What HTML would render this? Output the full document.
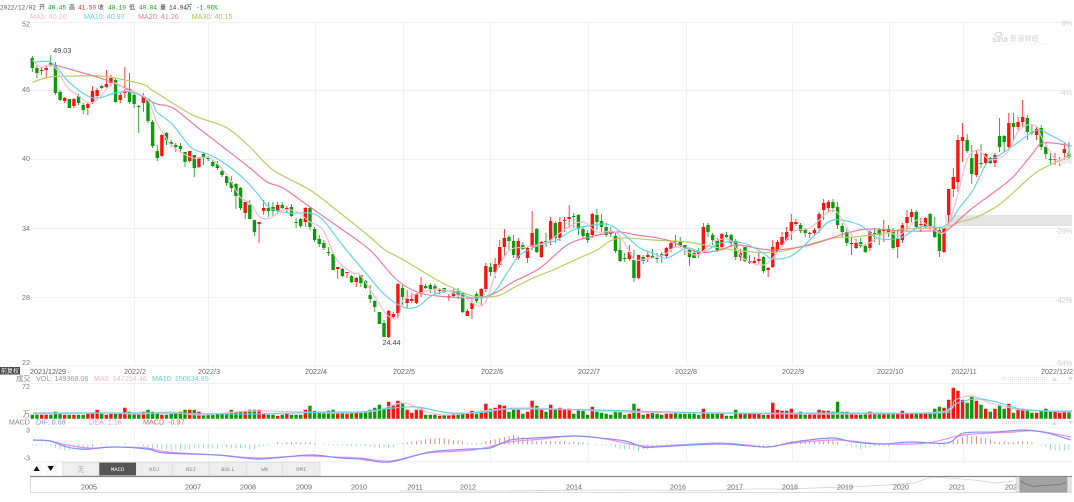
<!DOCTYPE html>
<html><head><meta charset="utf-8"><style>
html,body{margin:0;padding:0;background:#fff;width:1074px;height:502px;overflow:hidden}
svg{display:block;position:absolute;left:0;top:0;filter:blur(.3px);fill:#666}
text{font-family:"Liberation Sans","Noto Sans CJK SC",sans-serif;font-size:7.2px}
.m text{font-family:"Liberation Mono","Noto Sans CJK SC",monospace;font-size:6px}
.g{fill:#0a9a0a}.r{fill:#f01a14}
.t{text-anchor:middle;font-family:"Liberation Mono","Noto Sans CJK SC",monospace;font-size:5.6px;fill:#888}
.y{text-anchor:end;fill:#777}
.a{text-anchor:middle;fill:#666}
</style></head><body>
<svg id="c" xmlns="http://www.w3.org/2000/svg" width="1074" height="502" viewBox="0 0 1074 502">
<rect width="1074" height="502" fill="#fff"/>
<path d="M31 22.5H1072M31 90.5H1072M31 159.5H1072M31 228.5H1072M31 297.5H1072M31 366H1072M31 383.5H1072M31 428H1072M31 461.5H1072" stroke="#f1f1f1" stroke-width="1" fill="none"/>
<path d="M134.5 22V366M208.5 22V366M315.5 22V366M403.5 22V366M490.5 22V366M588.5 22V366M686.5 22V366M792.5 22V366M889.5 22V366M963.5 22V366M134.5 383V419M208.5 383V419M315.5 383V419M403.5 383V419M490.5 383V419M588.5 383V419M686.5 383V419M792.5 383V419M889.5 383V419M963.5 383V419M134.5 428V461M208.5 428V461M315.5 428V461M403.5 428V461M490.5 428V461M588.5 428V461M686.5 428V461M792.5 428V461M889.5 428V461M963.5 428V461" stroke="#f1f1f1" stroke-width="1" fill="none"/>
<rect x="945" y="215" width="127" height="11" fill="#e4e4e4"/>
<g id="cand"></g>
<g fill="none" stroke-width="1.15" stroke-linejoin="round" stroke-linecap="round">
<polyline class="s" stroke="#b5cf5e" points="33,82 50,77 75,76 100,76 120,79 145,85 152,90 187,112 200,118 227,128 250,147 273,170 310,190 340,213 370,237 385,250 400,258 437,280 453,288 473,296 497,296 513,288 533,278 553,270 577,259 597,250 610,241 623,238 653,240 687,242 720,248 753,252 777,252 800,247 833,238 853,237 887,233 903,229 937,228 945,228 960,222 977,217 1000,204 1027,180 1040,170 1063,159 1070,156"/>
<polyline class="s" stroke="#f1739c" points="55,65 100,78 130,90 145,98 157,104 173,108 197,127 223,147 250,168 267,182 283,188 310,207 347,233 357,240 373,253 397,280 420,293 450,297 480,298 497,292 513,282 540,268 567,245 590,237 617,232 637,235 667,240 697,252 720,250 737,245 770,250 800,247 820,242 847,233 870,229 903,231 937,231 945,232 970,210 993,193 1013,177 1033,153 1043,143 1067,145 1071,146"/>
<polyline class="s" stroke="#5fd2ea" points="35,62 52,63 70,83 93,98 115,93 130,92 150,100 157,112 172,124 187,143 195,150 210,155 227,165 243,178 257,193 270,208 290,213 310,213 323,220 340,242 353,258 370,278 385,295 403,307 417,307 433,295 453,291 473,298 493,293 507,273 520,255 540,245 557,240 573,230 593,225 610,225 627,237 640,248 653,253 667,258 687,248 703,252 720,243 743,243 763,253 773,259 793,255 817,233 833,220 860,225 877,238 900,238 920,227 945,226 960,207 973,190 987,163 1000,155 1017,143 1037,130 1050,135 1067,145 1070,156"/>
<polyline class="s" stroke="#ffb8cf" points="33,60 40,67 50,65 57,70 67,87 77,95 90,103 100,97 113,83 127,90 137,93 148,100 157,123 163,133 173,147 193,158 210,158 227,175 240,197 250,203 260,217 270,218 283,210 297,212 310,222 323,230 337,260 353,273 360,275 377,300 387,315 398,318 403,300 420,293 440,289 463,297 483,305 497,270 510,250 527,247 547,242 567,228 583,222 597,232 617,233 633,258 640,260 663,255 677,247 697,255 713,242 730,240 743,258 763,265 777,253 793,232 810,228 827,213 837,212 850,233 863,245 887,233 900,235 917,220 930,227 945,232 957,197 967,160 978,150 990,160 1007,153 1017,133 1027,125 1037,127 1043,140 1057,160 1070,153"/>
</g>
<g id="vol"></g>
<g fill="none" stroke-width="1.15" stroke-linejoin="round">
<polyline class="s" stroke="#ffb8cf" points="33,414 100,413 140,414 170,412 200,415 250,411 300,412 340,413 375,411 403,403 427,412 450,415 493,410 527,408 627,412 720,413 830,414 940,412 955,400 972,396 990,403 1007,407 1024,410 1072,412"/>
<polyline class="s" stroke="#5fd2ea" points="33,413 150,413 250,414 330,412 360,412 393,408 417,407 450,413 487,412 510,409 593,410 720,413 840,413 940,413 947,410 960,402 980,399 1000,403 1020,409 1047,411 1072,411"/>
</g>
<g id="hist"></g>
<g fill="none" stroke-width="1.15" stroke-linejoin="round">
<polyline class="s" stroke="#f08cf2" points="33,440 50,441 67,445 90,448 113,447 147,448 167,452 217,455 257,458 300,456 333,457 360,458 390,461 427,453 473,450 510,442 543,439 573,436 600,438 643,446 677,445 720,443 747,445 767,447 794,443 837,440 881,444 927,443 964,435 1014,432 1037,431 1071,437"/>
<polyline class="s" stroke="#7f90f2" points="33,440 50,441 67,447 80,449 90,449 113,447 147,449 165,453 217,455 257,459 285,457 313,455 340,458 360,459 390,462 430,452 470,449 490,448 510,440 535,438 575,436 600,438 625,441 643,447 655,447 720,444 767,447 794,442 831,438 854,442 881,444 911,442 947,443 964,433 997,432 1024,430 1047,433 1071,440"/>
</g>

<g class="m">
<text x="0" y="9.5" fill="#555">2022/12/02</text>
<text x="39" y="9.5" fill="#333">开</text><text x="48" y="9.5" class="g">40.45</text>
<text x="69" y="9.5" fill="#333">高</text><text x="78" y="9.5" class="r">41.50</text>
<text x="98" y="9.5" fill="#333">收</text><text x="108" y="9.5" class="g">40.10</text>
<text x="129" y="9.5" fill="#333">低</text><text x="139" y="9.5" class="g">40.04</text>
<text x="160" y="9.5" fill="#333">量</text><text x="169" y="9.5" fill="#333">14.94</text><text x="186" y="9.5" fill="#333">万</text>
<text x="196" y="9.5" class="g">-1.96%</text>
</g>
<text x="30" y="19" fill="#ffb3cb">MA5: 40.20</text>
<text x="84" y="19" fill="#5fcfe6">MA10: 40.97</text>
<text x="138" y="19" fill="#f4739e">MA20: 41.26</text>
<text x="191.7" y="19" fill="#a9c64a">MA30: 40.15</text>

<text x="30" y="26.5" class="y">52</text><text x="30" y="92" class="y">46</text><text x="30" y="161" class="y">40</text><text x="30" y="231" class="y">34</text><text x="30" y="300" class="y">28</text><text x="30" y="365" class="y">22</text>
<text x="1072" y="25.5" class="y" style="fill:#ccc">9%</text><text x="1072" y="95" class="y" style="fill:#ccc">-4%</text><text x="1072" y="164" class="y" style="fill:#ccc">-16%</text><text x="1072" y="233.5" class="y" style="fill:#ccc">-29%</text><text x="1072" y="302.5" class="y" style="fill:#ccc">-42%</text><text x="1072" y="365.5" class="y" style="fill:#ccc">-54%</text>
<text x="53.3" y="53" fill="#444">49.03</text><text x="382.5" y="345" fill="#444">24.44</text>

<ellipse cx="998.5" cy="34.5" rx="3.2" ry="2.2" fill="none" stroke="#d4d4d4" stroke-width="1"/>
<text x="992" y="42" style="font-size:8px;font-style:italic;font-weight:bold;fill:#d4d4d4">sina</text>
<text x="1010" y="41" style="font-size:7.2px;fill:#d4d4d4">新浪财经</text>
<text x="1000" y="45" style="font-size:2.4px;fill:#ddd;letter-spacing:2px">finance sina com</text>

<text x="30" y="374" fill="#555">2021/12/29</text>
<text x="135" y="374" class="a">2022/2</text><text x="209" y="374" class="a">2022/3</text><text x="316" y="374" class="a">2022/4</text><text x="404" y="374" class="a">2022/5</text><text x="492" y="374" class="a">2022/6</text><text x="589" y="374" class="a">2022/7</text><text x="686" y="374" class="a">2022/8</text><text x="793" y="374" class="a">2022/9</text><text x="890" y="374" class="a">2022/10</text><text x="964" y="374" class="a">2022/11</text><text x="1041" y="374">2022/12/2</text>

<rect x="0" y="367" width="20" height="7.5" fill="#444"/>
<text x="1" y="373" style="font-size:6px;fill:#fff">前复权</text>
<text x="16" y="381" style="fill:#888">成交</text>
<text x="36" y="381" style="fill:#999">VOL: 149368.06</text>
<text x="94" y="381" style="fill:#ffb3cb">MA5: 147254.46</text>
<text x="152" y="381" style="fill:#5fcfe6">MA10: 150634.65</text>
<text x="30" y="389" class="y">72</text><text x="30" y="416.5" class="y">万</text>
<path d="M1002 377.5H1047M1002 379.5H1047M1002 421.5H1047M1002 423.5H1047" stroke="#ddd" stroke-width="1" stroke-dasharray="1 1"/>
<path d="M1052 381l2.5-4 2.5 4zM1068 377l2.5 4 2.5-4zM1052 425l2.5-4 2.5 4zM1068 421l2.5 4 2.5-4z" fill="#ddd"/>

<text x="30" y="424.5" class="y" style="fill:#888">MACD</text>
<text x="36" y="424.5" style="fill:#7f90f2">DIF: 0.68</text>
<text x="89" y="424.5" style="fill:#f08cf2">DEA: 1.16</text>
<text x="143" y="424.5" style="fill:#c66868">MACD: -0.97</text>
<text x="30" y="432.5" class="y">3</text><text x="30" y="460.5" class="y">-3</text>

<rect x="31" y="462.5" width="11.5" height="13" fill="#fafafa"/><rect x="45" y="462.5" width="12.5" height="13" fill="#fafafa"/>
<path d="M33.5 471l3.2-5 3.2 5z" fill="#111"/><path d="M47.5 466l3.2 5 3.2-5z" fill="#111"/>
<g fill="#eee" stroke="#ddd" stroke-width=".8">
<rect x="62.7" y="462.5" width="36.6" height="13"/><rect x="136" y="462.5" width="36.7" height="13"/><rect x="172.7" y="462.5" width="36.6" height="13"/><rect x="209.3" y="462.5" width="37.4" height="13"/><rect x="246.7" y="462.5" width="36" height="13"/><rect x="282.7" y="462.5" width="37.3" height="13"/>
</g>
<rect x="99.3" y="462.5" width="36.7" height="13" fill="#555"/>
<text x="81" y="471.5" class="t" style="font-size:7px;fill:#aaa">无</text>
<text x="117.6" y="471" class="t" style="fill:#fff">MACD</text>
<text x="154.3" y="471" class="t">KDJ</text><text x="191" y="471" class="t">RSI</text><text x="228" y="471" class="t">BOLL</text><text x="264.7" y="471" class="t">WR</text><text x="301.3" y="471" class="t">DMI</text>

<path d="M30.5 476.5V492.5H1071V476.5" fill="none" stroke="#ddd" stroke-width="1"/>
<polyline fill="none" stroke="#d2d2d2" stroke-width=".8" points="400,491 500,491 600,490 714,490.5 747,489 781,489 814,488 847,487 887,485 914,483 932,477 947,478 974,480 997,483 1014,481"/>
<g style="font-size:7px">
<text x="89" y="489.5" class="a">2005</text><text x="193" y="489.5" class="a">2007</text><text x="248" y="489.5" class="a">2008</text><text x="304" y="489.5" class="a">2009</text><text x="359" y="489.5" class="a">2010</text><text x="415" y="489.5" class="a">2011</text><text x="468" y="489.5" class="a">2012</text><text x="574" y="489.5" class="a">2014</text><text x="678" y="489.5" class="a">2016</text><text x="735" y="489.5" class="a">2017</text><text x="790" y="489.5" class="a">2018</text><text x="845" y="489.5" class="a">2019</text><text x="901" y="489.5" class="a">2020</text><text x="957" y="489.5" class="a">2021</text><text x="1005" y="489.5">2022</text>
</g>
<path d="M30 476.5H1072" stroke="#8a8a8a" stroke-width="1.3"/>
<rect x="1016" y="477" width="3.5" height="15.5" fill="#e4e4e4" stroke="#ccc" stroke-width=".5"/>
<rect x="1019.5" y="477" width="48" height="15.5" fill="#a2a2a2"/>
<rect x="1067.5" y="477" width="3.5" height="15.5" fill="#e4e4e4" stroke="#ccc" stroke-width=".5"/>
<polyline fill="none" stroke="#6e6e6e" stroke-width=".8" points="1020,481 1026,484 1034,486.5 1041,485.5 1052,485 1060,484.5 1066,482.5"/>
</svg>
<script>
var d="g 56 58 68 72,g 65 68 73 78,r 67 70 71 75,r 66 68 70 79,g 55 63 65 67,g 62 65 93 95,g 90 92 100 101,r 97 98 101 103,g 99 99 108 108,r 98 99 106 108,g 94 96 103 105,g 103 105 110 114,r 102 104 108 115,r 86 91 102 104,r 88 90 96 98,g 85 86 88 89,r 70 84 87 88,r 75 78 83 86,g 78 80 102 103,r 92 95 100 103,r 67 91 93 98,g 73 89 102 104,g 93 95 104 108,g 105 106 107 133,r 93 97 103 112,g 98 100 121 123,g 120 122 146 148,g 145 151 158 161,r 134 135 156 157,g 132 133 140 145,g 140 142 144 147,g 143 145 147 152,g 143 146 149 152,g 152 152 162 167,r 151 151 161 162,g 155 155 168 177,r 157 158 167 168,g 152 154 158 165,g 156 158 159 161,g 160 162 166 167,g 161 164 168 170,g 168 171 175 177,g 176 176 183 186,g 176 182 188 192,g 183 184 196 209,g 187 188 208 210,r 202 202 213 219,g 200 205 219 219,g 220 220 232 236,r 222 222 224 243,r 200 208 211 215,g 202 208 211 217,g 202 207 211 216,r 202 205 211 214,g 202 205 208 209,r 206 208 209 212,g 204 207 216 217,g 218 222 223 228,g 218 219 226 228,r 207 208 222 227,g 207 208 227 230,g 227 229 240 242,g 235 239 244 247,g 240 243 248 250,g 247 252 253 256,g 252 254 270 270,r 267 267 269 279,g 268 269 276 277,r 272 272 273 278,g 275 276 282 283,r 277 278 282 287,g 275 275 283 287,g 280 281 288 289,g 285 295 299 303,g 300 301 307 312,g 312 312 324 324,g 320 323 337 337,r 310 311 337 338,r 312 314 317 319,r 283 284 313 318,g 285 288 297 305,r 290 299 303 308,r 293 299 301 303,r 293 294 303 304,r 277 285 294 297,g 284 286 288 289,g 283 285 289 293,g 284 286 289 294,r 288 290 291 294,g 288 288 292 293,r 294 296 297 301,r 289 292 296 297,g 288 291 295 299,g 293 293 312 313,r 309 311 316 316,r 299 303 309 319,g 292 294 301 303,r 288 289 298 306,r 263 266 289 292,g 263 267 272 276,r 258 264 272 278,r 240 247 265 267,r 229 238 247 257,g 235 237 241 250,g 235 241 255 258,r 238 241 258 260,g 242 245 249 250,r 247 248 258 263,r 211 233 247 250,g 228 229 252 253,r 241 242 257 258,g 233 241 242 247,r 217 221 240 245,g 221 223 238 243,r 217 222 238 241,r 217 220 221 232,r 205 217 219 228,g 213 216 217 228,g 214 215 229 235,g 227 229 236 239,g 230 233 240 243,r 213 214 235 238,g 209 215 222 230,g 214 221 227 232,g 223 227 235 237,g 227 231 234 237,g 233 236 251 253,g 237 250 261 262,g 253 258 259 262,r 245 252 259 261,g 250 260 278 282,r 255 255 278 279,g 255 257 261 264,r 252 255 257 262,g 249 256 258 258,g 253 258 258 263,g 252 254 256 263,r 247 248 256 258,r 242 243 249 252,g 235 241 242 247,g 237 242 245 248,g 245 245 248 255,g 249 250 257 266,g 250 253 258 258,g 248 252 254 258,r 223 227 251 253,g 223 225 232 237,g 233 235 240 245,g 238 240 250 252,r 233 234 247 250,g 232 235 237 238,g 234 235 243 247,g 239 241 257 260,r 249 253 257 261,g 247 247 261 262,r 255 261 263 264,r 257 261 263 264,r 253 259 261 264,g 256 257 271 273,r 267 268 270 277,r 240 247 267 268,r 240 242 252 253,r 232 237 245 247,r 227 232 240 241,r 214 222 231 240,r 219 222 224 226,g 223 225 231 233,g 228 229 233 237,r 232 233 233 238,r 228 230 233 236,r 212 214 228 233,r 199 203 210 220,r 200 202 208 212,g 199 202 208 212,g 202 207 225 229,g 223 226 232 237,g 227 232 243 246,r 237 243 243 255,r 239 243 248 249,g 238 242 246 248,g 245 246 252 253,r 230 232 248 251,g 228 233 234 242,g 228 230 235 245,r 220 230 231 242,g 225 229 233 237,g 228 231 248 250,r 230 239 247 258,r 223 225 240 243,r 210 217 223 230,r 209 212 217 222,g 210 212 227 228,r 218 224 225 232,r 217 218 226 228,g 213 214 226 230,g 217 228 237 238,g 227 230 251 257,r 228 228 252 253,r 189 189 215 226,r 168 177 189 197,r 135 140 182 192,r 123 137 141 162,g 134 140 151 153,g 145 158 174 184,r 150 154 175 177,g 144 163 163 168,r 153 154 163 165,g 157 158 163 164,r 153 155 163 167,g 118 136 147 152,g 135 136 142 152,r 113 123 147 148,g 113 123 127 140,r 117 122 127 130,r 100 117 122 127,g 115 118 132 140,g 125 132 133 135,r 127 129 135 140,g 125 128 147 150,g 143 147 154 159,g 152 159 160 165,r 153 159 160 165,r 157 160 161 166,r 143 149 153 160,g 142 153 157 159".split(",");
var vol=[4,4,4,4,4,7,5,4,4,4,4,4,5,6,9,5,4,5,6,5,11,7,6,5,7,9,7,5,4,4,5,6,7,9,9,9,7,4,4,4,5,5,5,9,7,7,8,9,9,9,5,4,4,3,4,5,4,4,4,9,13,8,7,7,8,9,7,6,5,6,6,6,7,9,11,14,10,17,13,18,16,9,6,9,10,4,4,4,3,4,4,5,5,6,5,8,5,8,15,10,11,14,13,7,9,9,5,7,18,13,9,7,14,9,11,9,10,5,9,8,4,12,7,6,5,4,8,7,4,5,15,10,4,5,6,5,4,5,5,6,5,5,5,5,4,10,5,5,5,5,3,3,9,5,5,5,6,5,4,4,16,9,8,8,10,5,7,4,5,5,9,8,8,7,17,7,7,6,4,4,5,7,5,6,5,5,6,6,8,6,5,5,6,6,5,10,12,11,19,31,28,19,16,22,18,14,10,7,10,14,10,15,6,9,10,9,6,6,8,10,8,8,6,8,8];
var h=[-1,-1,-1,-1,-2,-4,-5,-6,-6,-5,-5,-5,-4,-3,-1,-1,-1,0,0,0,1,0,0,-1,-2,-3,-4,-4,-5,-5,-6,-5,-5,-5,-5,-4,-4,-4,-4,-4,-4,-3,-3,-4,-4,-4,-4,-5,-5,-3,-2,-1,0,2,1,2,2,2,2,2,2,1,0,-1,-1,-1,-1,-1,-2,-2,-2,-2,-2,-2,-3,-4,-3,-4,-3,-1,1,2,3,3,4,5,6,6,6,6,5,4,4,3,1,1,1,1,3,4,5,6,7,8,9,8,7,6,4,3,3,3,3,3,3,3,2,3,2,2,1,0,-1,-1,-1,-2,-3,-5,-5,-5,-6,-7,-5,-5,-4,-3,-2,-2,-2,-1,-1,0,0,0,0,1,1,2,1,1,0,0,-1,-1,-2,-2,-3,-3,-3,-2,0,0,1,2,3,3,4,3,3,3,3,3,5,4,2,0,-2,-3,-3,-5,-4,-3,-2,-2,-2,-2,-1,-1,1,1,1,1,1,0,1,-1,-2,-2,1,3,5,7,9,8,8,7,6,5,3,2,3,2,2,3,3,3,2,0,-1,-3,-5,-6,-6,-6,-6];
var X=function(i){return (32.3+4.628*i).toFixed(2)};
var G="#0a9a0a",R="#fb140c",w={g:"",r:""},b={g:"",r:""},v={g:"",r:""},hp="",hn="";
d.forEach(function(s,i){var a=s.split(" "),c=a[0],x=X(i);
 w[c]+="M"+x+" "+a[1]+"V"+a[4];
 var bb=Math.max(+a[3],+a[2]+1);
 b[c]+="M"+x+" "+a[2]+"V"+bb;
 v[c]+="M"+x+" 418.7v-"+vol[i];
 if(h[i]>0)hp+="M"+x+" 444.3v-"+h[i]; else if(h[i]<0)hn+="M"+x+" 444.3v"+(-h[i]);
});
var NS="http://www.w3.org/2000/svg";
function P(id,p,col,sw){var e=document.createElementNS(NS,"path");e.setAttribute("d",p);e.setAttribute("stroke",col);e.setAttribute("stroke-width",sw);e.setAttribute("fill","none");document.getElementById(id).appendChild(e)}
P("cand",w.g,G,.8);P("cand",w.r,R,.8);P("cand",b.g,G,3.4);P("cand",b.r,R,3.4);
P("vol",v.g,G,3.4);P("vol",v.r,R,3.4);
P("hist",hp,"#cc7a6a",.8);P("hist",hn,"#7fd8bb",.8);
/* smooth the moving-average polylines with Catmull-Rom curves */
[].slice.call(document.querySelectorAll("polyline.s")).forEach(function(pl){
 var p=pl.getAttribute("points").split(" ").map(function(q){return q.split(",").map(Number)}),s="M"+p[0][0]+" "+p[0][1];
 for(var i=0;i<p.length-1;i++){
  var a=p[i-1]||p[i],b0=p[i],c=p[i+1],e=p[i+2]||c;
  s+="C"+(b0[0]+(c[0]-a[0])/6).toFixed(1)+" "+(b0[1]+(c[1]-a[1])/6).toFixed(1)+" "+(c[0]-(e[0]-b0[0])/6).toFixed(1)+" "+(c[1]-(e[1]-b0[1])/6).toFixed(1)+" "+c[0]+" "+c[1];
 }
 var n=document.createElementNS(NS,"path");n.setAttribute("d",s);n.setAttribute("stroke",pl.getAttribute("stroke"));n.setAttribute("fill","none");
 pl.parentNode.replaceChild(n,pl);
});
</script>
</body></html>
